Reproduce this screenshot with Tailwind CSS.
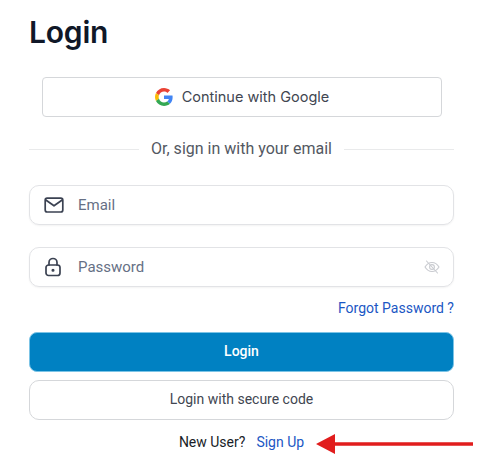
<!DOCTYPE html>
<html lang="en">
<head>
    <meta charset="UTF-8">
    <meta name="viewport" content="width=device-width, initial-scale=1.0">
    <title>Login</title>
    <script src="https://cdn.jsdelivr.net/npm/@tailwindcss/browser@4"></script>
</head>
<body class="bg-white min-h-screen font-['Roboto',sans-serif]">
    <div class="w-[425px] ml-[29px] pt-[12px] relative">
        <h1 class="text-[30px] leading-[40px] font-semibold text-[#101828] font-['Inter',sans-serif] tracking-[-0.2px]">Login</h1>

        <!-- Google -->
        <button class="mt-[25px] ml-[13px] w-[400px] h-[40px] flex items-center justify-center gap-[9px] bg-white border border-[#d5d7da] rounded-[4px]">
            <svg class="w-[18px] h-[18px]" viewBox="0 0 48 48">
                <path fill="#EA4335" d="M24 9.5c3.5 0 6.7 1.2 9.2 3.6l6.9-6.9C35.9 2.4 30.5 0 24 0 14.6 0 6.5 5.4 2.6 13.2l8 6.2C12.500 13.700 17.800 9.500 24 9.500z"/>
                <path fill="#4285F4" d="M47 24.500c0-1.600-.1-3.100-.4-4.500H24v9h12.900c-.6 3-2.200 5.500-4.700 7.200l7.700 6C44.400 37.900 47 31.800 47 24.500z"/>
                <path fill="#FBBC05" d="M10.600 28.600c-.5-1.400-.8-3-.8-4.600s.3-3.200.8-4.600l-8-6.200C.9 16.500 0 20.100 0 24s.9 7.500 2.600 10.800l8-6.200z"/>
                <path fill="#34A853" d="M24 48c6.500 0 11.900-2.100 15.900-5.800l-7.700-6c-2.200 1.500-4.900 2.300-8.200 2.300-6.200 0-11.500-4.200-13.400-9.900l-8 6.200C6.500 42.600 14.600 48 24 48z"/>
            </svg>
            <span class="text-[14.500px] font-normal text-[#414651] font-['Inter',sans-serif]">Continue with Google</span>
        </button>

        <!-- Divider -->
        <div class="mt-[22px] flex items-center h-[20px]">
            <div class="flex-1 h-px bg-[#e9eaeb]"></div>
            <span class="px-[12px] text-[16px] text-[#535862]">Or, sign in with your email</span>
            <div class="flex-1 h-px bg-[#e9eaeb]"></div>
        </div>

        <!-- Email -->
        <div class="mt-[26px] h-[40px] flex items-center border border-[#e2e3e6] rounded-[10px] shadow-xs">
            <svg class="ml-[14px] w-[20px] h-[20px] text-[#3b4252]" viewBox="0 0 20 20" fill="none" stroke="currentColor" stroke-width="1.700" stroke-linecap="round" stroke-linejoin="round">
                <rect x="1.200" y="3.200" width="17.600" height="13.800" rx="2"/>
                <path d="M1.800 5l8.200 5.800L18.200 5"/>
            </svg>
            <span class="ml-[14px] text-[15px] text-[#667085]">Email</span>
        </div>

        <!-- Password -->
        <div class="mt-[22px] h-[40px] flex items-center border border-[#e2e3e6] rounded-[10px] shadow-xs">
            <svg class="ml-[13px] w-[20px] h-[20px] text-[#3b4252]" viewBox="0 0 20 20" fill="none" stroke="currentColor" stroke-width="1.700" stroke-linecap="round" stroke-linejoin="round">
                <rect x="3" y="8" width="14" height="10.500" rx="2.500"/>
                <path d="M6 8V5.500a4 4 0 0 1 8 0V8"/>
                <circle cx="10" cy="13.200" r=".7" fill="currentColor"/>
            </svg>
            <span class="ml-[15px] text-[15px] text-[#667085]">Password</span>
            <svg class="ml-auto mr-[13px] w-[16px] h-[16px] text-[#c9cbd0]" viewBox="0 0 16 16" fill="none" stroke="currentColor" stroke-width="1.100" stroke-linecap="round" stroke-linejoin="round">
                <path d="M1 8c1.800-3 4.200-4.500 7-4.500S13.200 5 15 8c-1.800 3-4.200 4.500-7 4.500S2.800 11 1 8z"/>
                <circle cx="8" cy="8" r="2.400"/>
                <path d="M2.500 2l11 12"/>
            </svg>
        </div>

        <div class="mt-[12px] text-right text-[14px] leading-[18px] text-[#1b57c4]">Forgot Password ?</div>

        <!-- Buttons -->
        <button class="mt-[15px] w-full h-[40px] pb-[2px] bg-[#0081c2] border border-[#7cc4e6] rounded-[8px] text-[14px] font-medium text-white">Login</button>
        <button class="mt-[8px] w-full h-[40px] pb-[2px] bg-white border border-[#d5d7da] rounded-[10px] text-[14px] text-[#414651]">Login with secure code</button>

        <div class="mt-[13px] flex justify-center gap-[11px] text-[14px] leading-[18px]">
            <span class="text-[#181d27]">New User?</span>
            <span class="text-[#1b57c4]">Sign Up</span>
        </div>

        <!-- Annotation arrow -->
        <svg class="absolute left-[286px] top-[433px]" width="160" height="22" viewBox="0 0 160 22">
            <path fill="#e11d1d" d="M1 11L20 1V9.200H158V12.800H20V21z"/>
        </svg>
    </div>
</body>
</html>
